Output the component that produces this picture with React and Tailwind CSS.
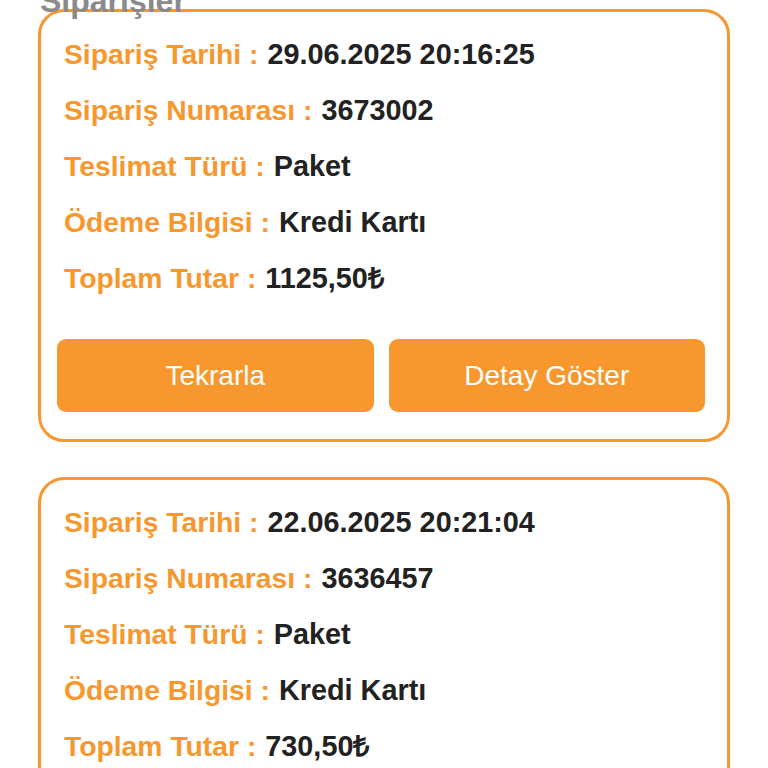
export default function App() {
  const orders = [
    { date: "29.06.2025 20:16:25", no: "3673002", type: "Paket", pay: "Kredi Kartı", total: "1125,50₺" },
    { date: "22.06.2025 20:21:04", no: "3636457", type: "Paket", pay: "Kredi Kartı", total: "730,50₺" },
  ];
  const Row = ({ label, value }) => (
    <div className="h-[56px] flex items-center whitespace-nowrap font-bold leading-none">
      <span className="text-[#f7972d] text-[28.3px]">{label} :</span>
      <span className="text-[#222222] text-[28.8px] ml-[9px]">{value}</span>
    </div>
  );
  return (
    <div className="w-[768px] h-[768px] overflow-hidden bg-white" style={{ fontFamily: '"Liberation Sans", Arial, sans-serif' }}>
      <div className="relative z-10 mt-[-15px] ml-[40px] h-[24px] text-[32px] font-bold text-[#8a8a8a] leading-none whitespace-nowrap">Siparişler</div>
      <div className="flex flex-col gap-[35px] pl-[38px] pr-[38px]">
        {orders.map((o, i) => (
          <div key={i} className="border-[3px] border-[#f7972d] rounded-[26px] pt-[14px] pb-[27px]">
            <div className="pl-[23px]">
              <Row label="Sipariş Tarihi" value={o.date} />
              <Row label="Sipariş Numarası" value={o.no} />
              <Row label="Teslimat Türü" value={o.type} />
              <Row label="Ödeme Bilgisi" value={o.pay} />
              <Row label="Toplam Tutar" value={o.total} />
            </div>
            <div className="flex gap-[15px] pl-[16px] pr-[22px] mt-[33px]">
              <button className="flex-1 h-[73px] rounded-[9px] bg-[#f7972d] text-white text-[28px]">Tekrarla</button>
              <button className="flex-1 h-[73px] rounded-[9px] bg-[#f7972d] text-white text-[28px]">Detay Göster</button>
            </div>
          </div>
        ))}
      </div>
    </div>
  );
}
